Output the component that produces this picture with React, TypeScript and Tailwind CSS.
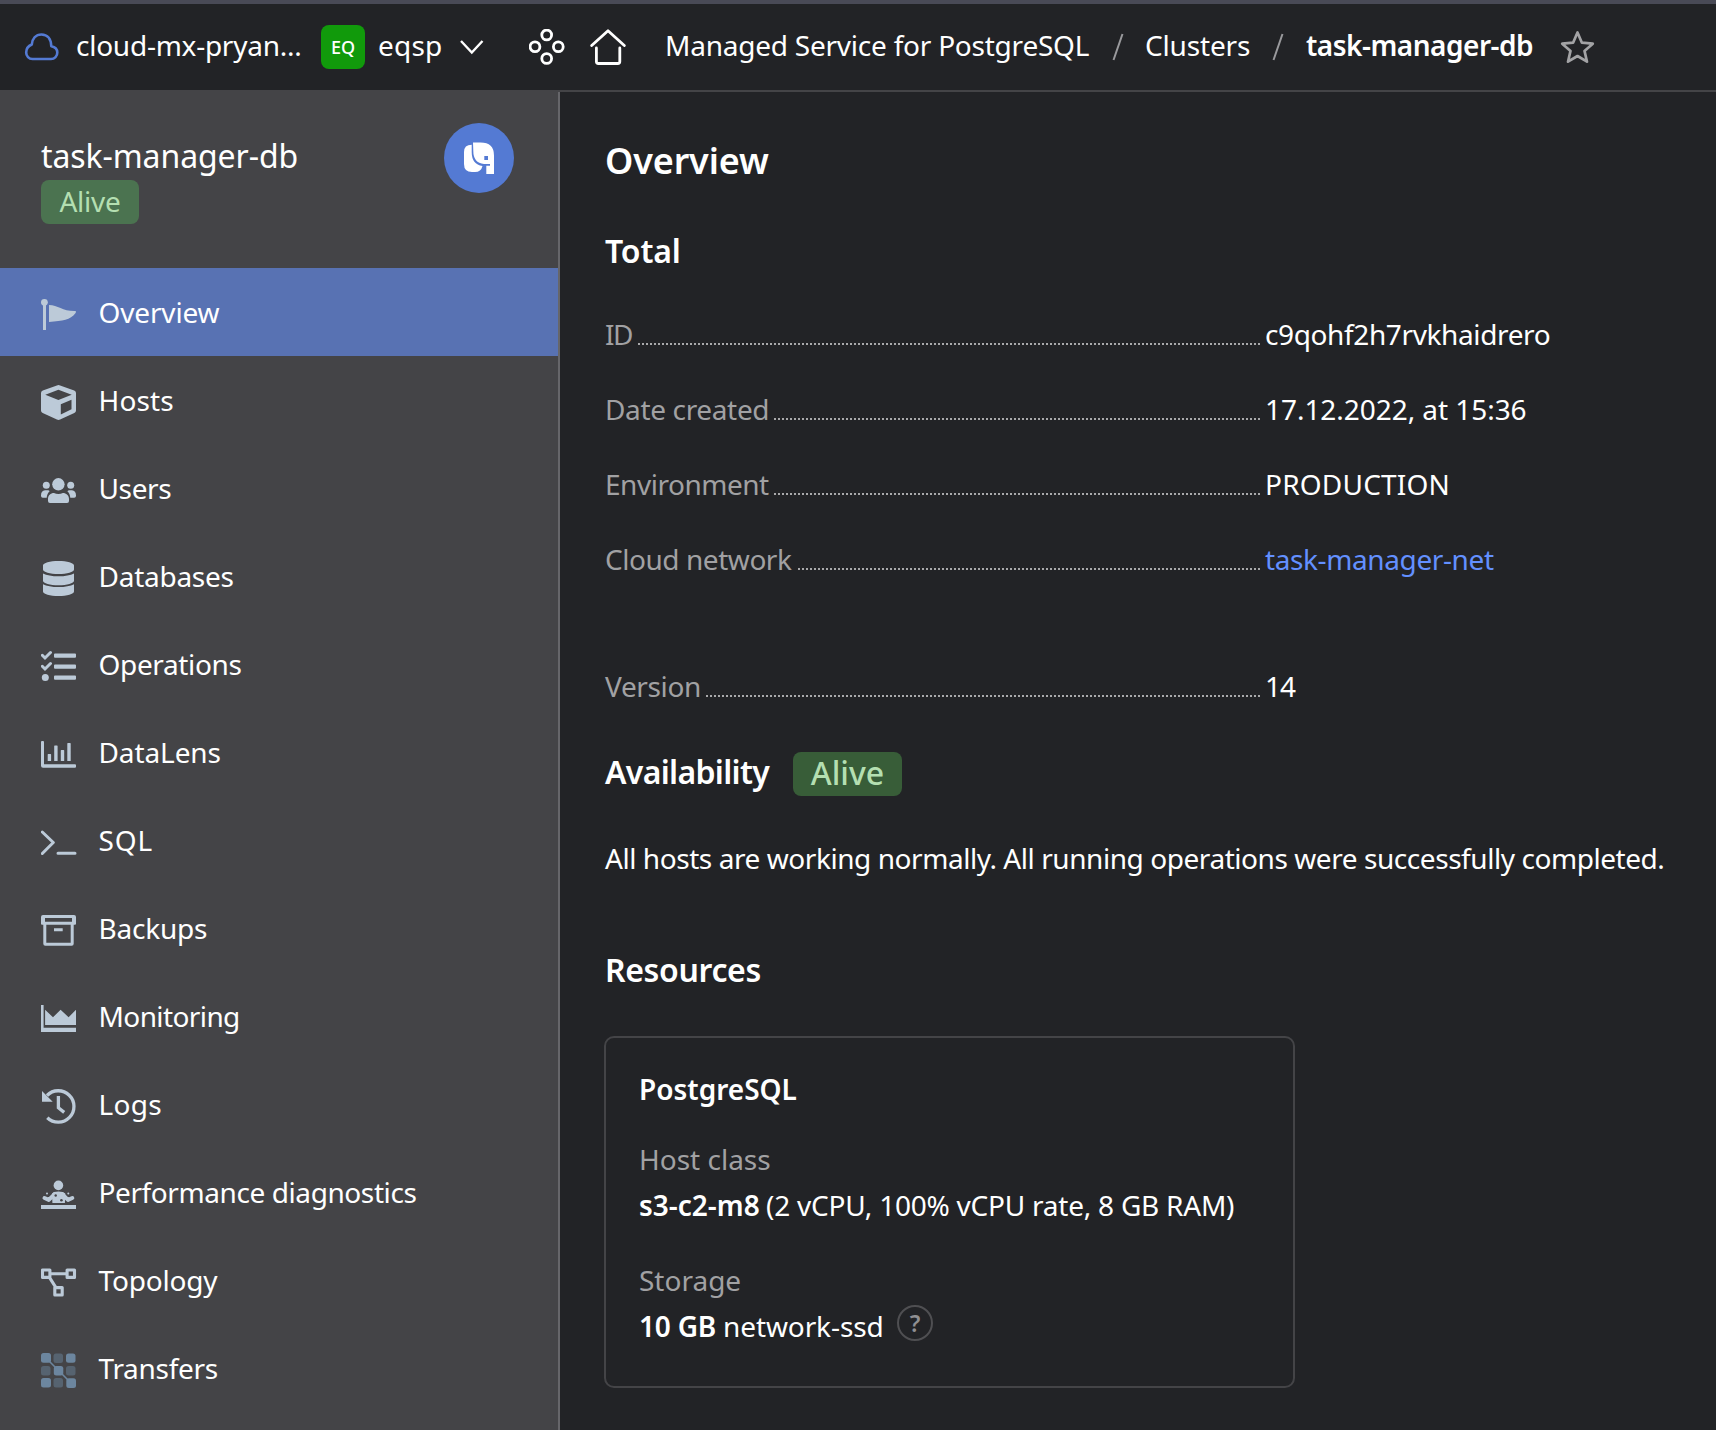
import React from "react";

const Icon = ({ children }: { children: React.ReactNode }) => (
  <svg viewBox="0 0 36 40" className="mt-1 h-10 w-9 shrink-0" fill="#bccad8">{children}</svg>
);

const bright = "#6c869f";
const dim = "#566370";

type NavItem = { label: string; track: string; icon: React.ReactNode };

const nav: NavItem[] = [
  { label: "Overview", track: "tracking-[-0.15px]", icon: <><circle cx="3.4" cy="8.3" r="3.4" /><path d="M2 9h3v27H2zM8 11c9 0 14 6.500 26.400 6.100q1.200.5.2 1.900C29 26.500 22 26.500 8 28z" /></> },
  { label: "Hosts", track: "tracking-[0.15px]", icon: <path fillRule="evenodd" d="M15.900 3.400q1.600-.7 3.200 0l14.100 5.200q1.800.7 1.800 2.500v17.400q0 1.800-1.700 2.600L19.100 37.600q-1.600.7-3.200 0L1.700 31.100Q0 30.300 0 28.500V11.100q0-1.800 1.800-2.500zM17.400 7.700L4.300 12.700l13.100 5.300 13.300-5.300zM19.800 22.200v10.200l10.700-5.200v-9.500z" /> },
  { label: "Users", track: "tracking-[-0.35px]", icon: <><circle cx="17.400" cy="14.300" r="6.200" /><circle cx="5.300" cy="15.300" r="3.500" /><circle cx="29.700" cy="15.300" r="3.500" /><path d="M7 31v-2c0-3.500 2.500-6 6-6 1.300.6 2.800 1 4.400 1s3.100-.4 4.400-1c3.500 0 6.200 2.500 6.200 6v2a2 2 0 0 1-2 2H9a2 2 0 0 1-2-2zM0 25.500c0-3 1.500-5.200 4-5.200h2.600c1 0 1.600.4 2 .9C6.900 22.800 6 25 5.700 27.700H1.800A1.800 1.800 0 0 1 0 26zM35 25.500c0-3-1.500-5.200-4-5.200h-2.600c-1 0-1.600.4-2 .9 1.700 1.600 2.600 3.800 2.900 6.500h3.900A1.800 1.800 0 0 0 35 26z" /></> },
  { label: "Databases", track: "tracking-[-0.26px]", icon: <path d="M2 7.500C2 5 9 3 17.500 3S33 5 33 7.500v4C33 14 26 16 17.500 16S2 14 2 11.500zM2 15.400c3.500 1.900 9 2.800 15.500 2.800s12-.9 15.500-2.800v7.400c0 2.500-7 4.500-15.500 4.500S2 25.300 2 22.800zM2 26.200C5.500 28.100 11 29 17.500 29s12-.9 15.500-2.800v7.300c0 2.500-7 4.500-15.500 4.500S2 36 2 33.500z" /> },
  { label: "Operations", track: "tracking-[-0.35px]", icon: <><path d="M14 7.400h20q1 0 1 1v2.400q0 1-1 1H14q-1 0-1-1V8.400q0-1 1-1zM14 18.400h20q1 0 1 1v2.400q0 1-1 1H14q-1 0-1-1v-2.400q0-1 1-1zM14 29.400h20q1 0 1 1v2.400q0 1-1 1H14q-1 0-1-1v-2.400q0-1 1-1z" /><circle cx="4.300" cy="31.400" r="3.500" /><path d="M1.300 9.300L4 12l5.500-5.500M1.300 20.300L4 23l5.500-5.500" fill="none" stroke="#bccad8" strokeWidth="3" strokeLinecap="round" /></> },
  { label: "DataLens", track: "tracking-[-0.1px]", icon: <path d="M0 8q0-1 1-1h1q1 0 1 1v22.300h31q1 0 1 1v1.400q0 1-1 1H2q-2 0-2-2zM6.700 20.500q0-.6.600-.6h2.200q.6 0 .6.6v6.400H6.700zM13.200 12q0-.6.600-.6H16q.6 0 .6.600v14.900h-3.400zM19.800 16.600q0-.6.600-.6h2.200q.6 0 .6.600v10.300h-3.400zM26.300 9.600q0-.6.600-.6h2.200q.6 0 .6.600v17.300h-3.400z" /> },
  { label: "SQL", track: "tracking-[0.9px]", icon: <path d="M1.300 10l11 10.500-11 11M17 31.300h17" fill="none" stroke="#bccad8" strokeWidth="3" strokeLinecap="round" strokeLinejoin="round" /> },
  { label: "Backups", track: "tracking-[-0.2px]", icon: <path fillRule="evenodd" d="M2 5h31q2 0 2 2v6.700q0 1-1 1h-1.300v19q0 2-2 2H4.300q-2 0-2-2v-19H1q-1 0-1-1V7q0-2 2-2zM4 8v3.700h27V8zM5.300 14.700v18h24.400v-18zM13 18.300h8.700v3H13z" /> },
  { label: "Monitoring", track: "tracking-[-0.6px]", icon: <path d="M0 7h2.600v22.700H35V34H0zM4.100 11.700L12 19.300l7.600-7.600 8 7.600 7.400-7.600V27H4.100z" /> },
  { label: "Logs", track: "tracking-[0.3px]", icon: <><path d="M1 5v10.700h10.700z" /><path d="M6 9.500A15.700 15.700 0 1 1 6.300 31.700M17.400 10v11.800l5.800 4.600" fill="none" stroke="#bccad8" strokeWidth="3.300" /></> },
  { label: "Performance diagnostics", track: "tracking-[-0.41px]", icon: <><circle cx="17.400" cy="11.400" r="4.800" /><path d="M0 31h35v4H0zM13 18q4.400-1.200 8.800 0l2.500 1.500-.4 9.500H11.400L11 19.500z" /><path d="M3.500 24l4.300 1.900 5.800-5.700M31.300 24L27 25.900l-5.800-5.700" fill="none" stroke="#bccad8" strokeWidth="4" strokeLinejoin="round" strokeLinecap="round" /><circle cx="6" cy="19.400" r="1" /><circle cx="27.300" cy="19.400" r="1" /><circle cx="14.700" cy="21.500" r="1.200" fill="#444447" /><circle cx="20.400" cy="26.200" r="1.300" fill="#444447" /></> },
  { label: "Topology", track: "tracking-[-0.2px]", icon: <path d="M1.500 8h7.400v7.400H1.500zM26.100 8h7.400v7.400h-7.400zM13.800 25.600h7.400V33h-7.400zM9 11.700h17M8.600 15.700l6 9.500" fill="none" stroke="#bccad8" strokeWidth="3.100" strokeLinejoin="round" /> },
  { label: "Transfers", track: "tracking-[-0.28px]", icon: <><g fill={dim}><rect x="12.500" y="3.500" width="9.500" height="9.500" rx="2.500" /><rect x="0" y="16" width="9.500" height="9.500" rx="2.500" /><rect x="25" y="16" width="9.500" height="9.500" rx="2.500" /><rect x="12.500" y="28" width="9.500" height="9.500" rx="2.500" /></g><path d="M8 11l19 19" stroke={bright} strokeWidth="1.600" /><g fill={bright}><rect x="0" y="3" width="10" height="9.700" rx="2.500" /><rect x="25" y="3.500" width="9.500" height="9.200" rx="2.500" /><rect x="12.800" y="16" width="9.500" height="9.500" rx="2.500" /><rect x="0" y="28" width="10" height="9.500" rx="2.500" /><rect x="25.300" y="28.200" width="9.700" height="9.700" rx="2.500" /></g></> },
];

type RowProps = { label: string; labelClass: string; value: string; valueClass: string };

const rows: RowProps[] = [
  { label: "ID", labelClass: "w-[31px] tracking-[-1.5px]", value: "c9qohf2h7rvkhaidrero", valueClass: "tracking-[-0.38px]" },
  { label: "Date created", labelClass: "w-[168px] tracking-[-0.35px]", value: "17.12.2022, at 15:36", valueClass: "tracking-[-0.05px]" },
  { label: "Environment", labelClass: "w-[169px] tracking-[-0.48px]", value: "PRODUCTION", valueClass: "tracking-[0.2px]" },
  { label: "Cloud network", labelClass: "w-[191px] tracking-[-0.45px]", value: "task-manager-net", valueClass: "tracking-[-0.39px] text-[#6390ff]" },
];

const Row = ({ label, labelClass, value, valueClass }: RowProps) => (
  <div className="flex h-9 whitespace-nowrap">
    <div className="flex w-[655px]">
      <span className={"shrink-0 text-[#a1a1a3] " + labelClass}>{label}</span>
      <span className="mt-[27px] h-0.5 flex-1 bg-[repeating-linear-gradient(270deg,#a9a9ab_0_2px,transparent_2px_4px)]" />
    </div>
    <span className={"ml-1 pl-px " + valueClass}>{value}</span>
  </div>
);

const Slash = () => (
  <svg viewBox="0 0 12 28" className="h-7 w-3 shrink-0" fill="none" stroke="#9a9a9d" strokeWidth="2"><path d="M10.500 1L1.500 27" /></svg>
);

export default function App() {
  return (
    <div className="h-[1430px] w-[1716px] overflow-hidden bg-[#222326] font-['Noto_Sans',sans-serif] text-[28px] leading-9 text-white">
      <header className="flex h-[92px] items-center whitespace-nowrap border-b-2 border-t-4 border-b-[#444447] border-t-[#494a56] pl-6">
        <svg viewBox="0 0 36 28" className="h-7 w-9" fill="none" stroke="#547ad3" strokeWidth="2.600" strokeLinejoin="round"><path d="M8.500 26h18.500a6.300 6.300 0 0 0 6.300-6.500c0-3.500-2.500-5.700-6-6.300C27 6 23.500 1.500 17.500 1.500S8.300 6 7.800 11.500C4 13 2.200 16 2.200 19.500A6.300 6.300 0 0 0 8.500 26z" /></svg>
        <span className="mb-1 ml-4 w-[245px] tracking-[-0.25px]">cloud-mx-pryan...</span>
        <span className="flex h-11 w-11 items-center justify-center rounded-lg bg-[#119a0b] text-[18px] font-medium">EQ</span>
        <span className="mb-1 ml-[13px] w-[81px] tracking-[0.2px]">eqsp</span>
        <svg viewBox="0 0 26 16" className="h-4 w-[26px]" fill="none" stroke="#fff" strokeWidth="2.400"><path d="M2 2l10.800 11.500L23.500 2" /></svg>
        <svg viewBox="0 0 36 36" className="ml-11 h-9 w-9" fill="none" stroke="#fff" strokeWidth="2.800"><circle cx="17.700" cy="6" r="4.900" /><circle cx="17.700" cy="29.500" r="4.900" /><circle cx="6" cy="17.800" r="4.900" /><circle cx="29.300" cy="17.800" r="4.900" /></svg>
        <svg viewBox="0 0 36 36" className="ml-[25px] h-9 w-9" fill="none" stroke="#fff" strokeWidth="2.800" strokeLinecap="round" strokeLinejoin="round"><path d="M1.700 16.500L18 1.700l16.300 14.800M6.400 19v13.500q0 2 2 2h19.400q2 0 2-2V19" /></svg>
        <span className="mb-1 ml-[39px] w-[447px] tracking-[-0.23px]">Managed Service for PostgreSQL</span>
        <Slash />
        <span className="mb-1 ml-[21px] w-[127px] tracking-[-0.16px]">Clusters</span>
        <Slash />
        <span className="mb-1 ml-[22px] w-[254px] font-semibold tracking-[-0.5px]">task-manager-db</span>
        <svg viewBox="0 0 36 36" className="h-9 w-9" fill="none" stroke="#a3a3a5" strokeWidth="2.700" strokeLinejoin="round"><path d="M17.500 3.500l4.400 10.200 10.900 1-8.300 7.200 2.500 10.800-9.500-5.700L8 32.700l2.500-10.800-8.300-7.200 10.900-1z" /></svg>
      </header>
      <div className="flex h-[1338px]">
        <aside className="w-[560px] shrink-0 border-r-2 border-[#66666a] bg-[#444447]">
          <div className="flex h-[176px] justify-between pl-[41px] pr-11">
            <div className="pt-11">
              <div className="whitespace-nowrap text-[32px] leading-10 tracking-[-0.09px]">task-manager-db</div>
              <div className="mt-1 flex h-11 w-[98px] items-center justify-center rounded-lg bg-[#4b7350] pb-0.5 tracking-[-0.27px] text-[#b4dfb1]">Alive</div>
            </div>
            <div className="mt-[31px] flex h-[70px] w-[70px] items-center justify-center rounded-full bg-[#547ad3]">
              <svg viewBox="0 0 30 32" className="h-8 w-[30px]" fill="#fff"><path d="M7.700 2.700Q0 2.700 0 10v12q0 8 8 8h3q6 0 7.500-6-10.800-1.500-10.800-14zM9 .5h7.500Q30 .5 30 13.500V32h-7.700v-8.300H26V22h-6Q9.300 21 9.300 9zM20.300 14v4H24v-4z" fillRule="evenodd" /></svg>
            </div>
          </div>
          <nav>
            {nav.map((item, i) => (
              <div key={item.label} className={"flex h-[88px] items-center gap-[21.500px] whitespace-nowrap pl-[41px] " + (i === 0 ? "bg-[#5872b3]" : "")}>
                <Icon>{item.icon}</Icon>
                <span className={item.track}>{item.label}</span>
              </div>
            ))}
          </nav>
        </aside>
        <main className="flex-1 whitespace-nowrap pl-[45px] pt-[47px]">
          <h1 className="text-[36px] font-semibold leading-[44px] tracking-[-0.15px]">Overview</h1>
          <h2 className="mt-12 text-[32px] font-semibold leading-10 tracking-[-0.15px]">Total</h2>
          <div className="mt-[45px] flex flex-col gap-[39px]">
            {rows.map((r) => <Row key={r.label} {...r} />)}
          </div>
          <div className="mt-[91px]">
            <Row label="Version" labelClass="w-[101px] tracking-[-0.36px]" value="14" valueClass="tracking-[-1px]" />
          </div>
          <div className="mt-12 flex h-11 items-center text-[32px] leading-10">
            <h2 className="mb-1 w-[188px] font-semibold tracking-[-0.68px]">Availability</h2>
            <span className="flex h-11 w-[109px] items-center justify-center rounded-lg bg-[#385d38] pb-[3px] font-medium text-[#b4dfb1]">Alive</span>
          </div>
          <p className="mt-11 tracking-[-0.44px]">All hosts are working normally. All running operations were successfully completed.</p>
          <h2 className="mt-[74px] text-[32px] font-semibold leading-10 tracking-[-0.35px]">Resources</h2>
          <section className="-ml-px mt-[46px] h-[352px] w-[691px] rounded-[10px] border-2 border-[#444447] pl-[33px] pt-[33px]">
            <h3 className="font-semibold">PostgreSQL</h3>
            <div className="mt-[34px] text-[#a1a1a3]">Host class</div>
            <div className="mt-2.5 flex">
              <span className="w-[127px] font-semibold">s3-c2-m8</span>
              <span className="tracking-[-0.23px]">(2 vCPU, 100% vCPU rate, 8 GB RAM)</span>
            </div>
            <div className="mt-[39px] text-[#a1a1a3]">Storage</div>
            <div className="mt-2.5 flex">
              <span className="w-[84px] font-semibold tracking-[-0.2px]">10 GB</span>
              <span className="w-[174px] tracking-[-0.1px]">network-ssd</span>
              <span className="-mt-[3px] flex h-9 w-9 items-center justify-center rounded-full border-2 border-[#4f4f52] text-[23px] font-semibold text-[#8f8f92]">?</span>
            </div>
          </section>
        </main>
      </div>
    </div>
  );
}
